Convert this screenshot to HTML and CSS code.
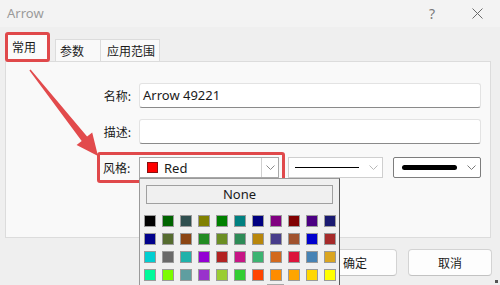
FILE: index.html
```html
<!DOCTYPE html>
<html lang="zh">
<head>
<meta charset="utf-8">
<title>Arrow</title>
<link rel="stylesheet" href="styles.css">
</head>
<body>
<header class="titlebar">
  <span class="title">Arrow</span>
  <span class="help">?</span>
  <span class="close"><svg width="11" height="11" viewBox="0 0 11 11"><path d="M0.5 0.5 L10.5 10.5 M10.5 0.5 L0.5 10.5" stroke="#6a6a6a" stroke-width="1" fill="none"/></svg></span>
</header>

<nav class="tabs">
  <div class="tab active">常用</div>
  <div class="tab">参数</div>
  <div class="tab last">应用范围</div>
</nav>

<section class="panel">
  <div class="row">
    <span class="label">名称:</span>
    <div class="input">Arrow 49221</div>
  </div>
  <div class="row row2">
    <span class="label">描述:</span>
    <div class="input"></div>
  </div>
  <div class="row row3">
    <div class="hl">
      <span class="label-s">风格:</span>
      <div class="combo color-combo">
        <span class="chip"></span>
        <span class="combo-text">Red</span>
        <span class="drop sep"><svg width="9" height="5" viewBox="0 0 9 5"><path d="M0.5 0.5 L4.5 4.5 L8.5 0.5" fill="none" stroke="#8a8a8a"/></svg></span>
      </div>
    </div>
    <div class="combo line-combo">
      <span class="line thin"></span>
      <span class="drop"><svg width="9" height="5" viewBox="0 0 9 5"><path d="M0.5 0.5 L4.5 4.5 L8.5 0.5" fill="none" stroke="#b8b8b8"/></svg></span>
    </div>
    <div class="combo width-combo">
      <span class="line thick"></span>
      <span class="drop"><svg width="9" height="5" viewBox="0 0 9 5"><path d="M0.5 0.5 L4.5 4.5 L8.5 0.5" fill="none" stroke="#7a7a7a"/></svg></span>
    </div>
  </div>
</section>

<div class="buttons">
  <button class="btn">确定</button>
  <button class="btn">取消</button>
</div>

<div class="popup">
  <div class="none-btn">None</div>
  <div class="grid">
    <span class="sw" style="background:#000000"></span>
    <span class="sw" style="background:#006400"></span>
    <span class="sw" style="background:#2F4F4F"></span>
    <span class="sw" style="background:#808000"></span>
    <span class="sw" style="background:#008000"></span>
    <span class="sw" style="background:#008080"></span>
    <span class="sw" style="background:#000080"></span>
    <span class="sw" style="background:#800080"></span>
    <span class="sw" style="background:#800000"></span>
    <span class="sw" style="background:#4B0082"></span>
    <span class="sw" style="background:#191970"></span>

    <span class="sw" style="background:#00008B"></span>
    <span class="sw" style="background:#556B2F"></span>
    <span class="sw" style="background:#8B4513"></span>
    <span class="sw" style="background:#228B22"></span>
    <span class="sw" style="background:#6B8E23"></span>
    <span class="sw" style="background:#2E8B57"></span>
    <span class="sw" style="background:#B8860B"></span>
    <span class="sw" style="background:#483D8B"></span>
    <span class="sw" style="background:#A0522D"></span>
    <span class="sw" style="background:#0000CD"></span>
    <span class="sw" style="background:#A52A2A"></span>

    <span class="sw" style="background:#00CED1"></span>
    <span class="sw" style="background:#696969"></span>
    <span class="sw" style="background:#20B2AA"></span>
    <span class="sw" style="background:#9400D3"></span>
    <span class="sw" style="background:#B22222"></span>
    <span class="sw" style="background:#C71585"></span>
    <span class="sw" style="background:#3CB371"></span>
    <span class="sw" style="background:#D2691E"></span>
    <span class="sw" style="background:#DC143C"></span>
    <span class="sw" style="background:#4682B4"></span>
    <span class="sw" style="background:#DAA520"></span>

    <span class="sw" style="background:#00FA9A"></span>
    <span class="sw" style="background:#7CFC00"></span>
    <span class="sw" style="background:#5F9EA0"></span>
    <span class="sw" style="background:#9932CC"></span>
    <span class="sw" style="background:#9ACD32"></span>
    <span class="sw" style="background:#32CD32"></span>
    <span class="sw" style="background:#FF4500"></span>
    <span class="sw" style="background:#FF8C00"></span>
    <span class="sw" style="background:#FFA500"></span>
    <span class="sw" style="background:#FFD700"></span>
    <span class="sw" style="background:#FFFF00"></span>
  </div>
  <div class="more"></div>
</div>

<svg class="arrow" width="500" height="285" viewBox="0 0 500 285">
  <polygon points="29.4,70.5 30.6,69.5 87.1,136.5 92.2,132.5 98,156 76.6,144.9 81.7,140.9" fill="#e24a4c"/>
</svg>

<span class="grip"></span>
</body>
</html>
```

FILE: styles.css
```css
* { box-sizing: border-box; margin: 0; padding: 0; }

html, body {
  width: 500px;
  height: 285px;
  overflow: hidden;
}

body {
  position: relative;
  background: #efefef;
  font-family: "Noto Sans", "Noto Sans CJK SC", sans-serif;
  font-size: 12px;
  color: #1a1a1a;
}

.titlebar {
  height: 27px;
  background: #f3f3f3;
  display: flex;
  align-items: center;
  padding: 0 13px 0 7px;
}

.title {
  flex: 1;
  color: #9a9a9a;
  font-size: 13px;
  line-height: 1;
}

.help {
  width: 20px;
  text-align: center;
  color: #7a7a7a;
  font-size: 14px;
  line-height: 1;
  margin-right: 25px;
}

.close {
  width: 20px;
  display: flex;
  justify-content: center;
}

.tabs {
  display: flex;
  align-items: flex-end;
  height: 34px;
  padding-left: 5px;
  font-family: "Noto Sans CJK SC", sans-serif;
}

.tab {
  height: 22px;
  width: 46px;
  margin-left: 5px;
  padding-left: 4px;
  background: #f9f9f9;
  border: 1px solid #dcdcdc;
  border-bottom: none;
  line-height: 21px;
  color: #1a1a1a;
}

.tab.last {
  width: 59px;
  margin-left: 0;
  border-left: none;
  padding-left: 6px;
}

.tab.active {
  position: relative;
  z-index: 2;
  margin-left: 0;
  width: 45px;
  height: 30px;
  margin-bottom: -1px;
  border: 3px solid #e0494b;
  border-radius: 3px;
  background: #fbfbfb;
  padding-left: 4px;
  line-height: 24px;
}

.panel {
  margin-left: 5px;
  width: 486px;
  height: 177px;
  background: #f9f9f9;
  border: 1px solid #dcdcdc;
  padding: 21px 9px 0 0;
  display: flex;
  flex-direction: column;
}

.row {
  display: flex;
  align-items: center;
}

.row2 { margin-top: 11px; }
.row3 { margin-top: 8px; }

.label {
  width: 125px;
  margin-right: 8px;
  text-align: right;
  font-family: "Noto Sans CJK SC", sans-serif;
}

.input {
  flex: 1;
  height: 25px;
  background: #fff;
  border: 1px solid #e3e3e3;
  border-bottom-color: #8a8a8a;
  border-radius: 3px;
  padding-left: 3px;
  line-height: 23px;
  font-size: 13px;
}

.hl {
  margin-left: 91px;
  width: 188px;
  height: 31px;
  border: 3px solid #e0494b;
  border-radius: 3px;
  padding: 0 3px;
  display: flex;
  align-items: center;
}

.label-s {
  width: 28px;
  margin-right: 8px;
  font-family: "Noto Sans CJK SC", sans-serif;
}

.combo {
  height: 21px;
  background: #fff;
  border: 1px solid #a8a8a8;
  display: flex;
  align-items: center;
  position: relative;
}

.color-combo {
  width: 140px;
  padding-left: 7px;
}

.chip {
  width: 11px;
  height: 11px;
  background: #ff0000;
  border: 1px solid #8a1010;
}

.combo-text {
  margin-left: 6px;
  flex: 1;
  font-size: 13px;
}

.drop {
  width: 17px;
  height: 19px;
  display: flex;
  align-items: center;
  justify-content: center;
}

.drop.sep {
  border-left: 1px solid #d0d0d0;
}

.line-combo {
  width: 95px;
  margin-left: 3px;
  border-color: #cfcfcf;
  padding-left: 6px;
}

.width-combo {
  width: 88px;
  margin-left: 10px;
  border-color: #7d7d7d;
  border-radius: 2px;
  padding-left: 8px;
}

.line { display: block; background: #000; }

.line.thin {
  width: 66px;
  height: 1px;
  margin-right: 7px;
}

.line.thick {
  width: 55px;
  height: 5px;
  border-radius: 3px;
  margin-right: 6px;
}

.buttons {
  display: flex;
  justify-content: flex-end;
  gap: 11px;
  padding-right: 8px;
  margin-top: 11px;
}

.btn {
  width: 84px;
  height: 27px;
  background: #fdfdfd;
  border: 1px solid #d3d3d3;
  border-bottom-color: #c2c2c2;
  border-radius: 4px;
  font-family: "Noto Sans CJK SC", sans-serif;
  font-size: 12px;
  color: #1a1a1a;
}

.popup {
  position: absolute;
  left: 139px;
  top: 178px;
  width: 201px;
  height: 107px;
  overflow: hidden;
  background: #f0f0f0;
  border: 1px solid #9a9a9a;
  border-right-color: #5a5a5a;
  border-bottom: none;
  z-index: 3;
  padding: 6px 0 0 4px;
}

.none-btn {
  margin-left: 2px;
  width: 187px;
  height: 19px;
  border: 1px solid #a0a0a0;
  text-align: center;
  line-height: 17px;
  font-size: 13px;
  color: #1a1a1a;
}

.grid {
  margin-top: 11px;
  display: grid;
  grid-template-columns: repeat(11, 12px);
  grid-auto-rows: 12px;
  gap: 6px;
}

.sw {
  display: block;
  border: 1px solid #9a9a9a;
}

.more {
  margin: 3px 0 0 123px;
  width: 17px;
  height: 12px;
  border: 1px solid #a8a8a8;
  background: #f4f4f4;
}

.arrow {
  position: absolute;
  left: 0;
  top: 0;
  z-index: 4;
  pointer-events: none;
}

.grip {
  position: absolute;
  right: 2px;
  bottom: 2px;
  width: 3px;
  height: 3px;
  background: #555;
}
```
